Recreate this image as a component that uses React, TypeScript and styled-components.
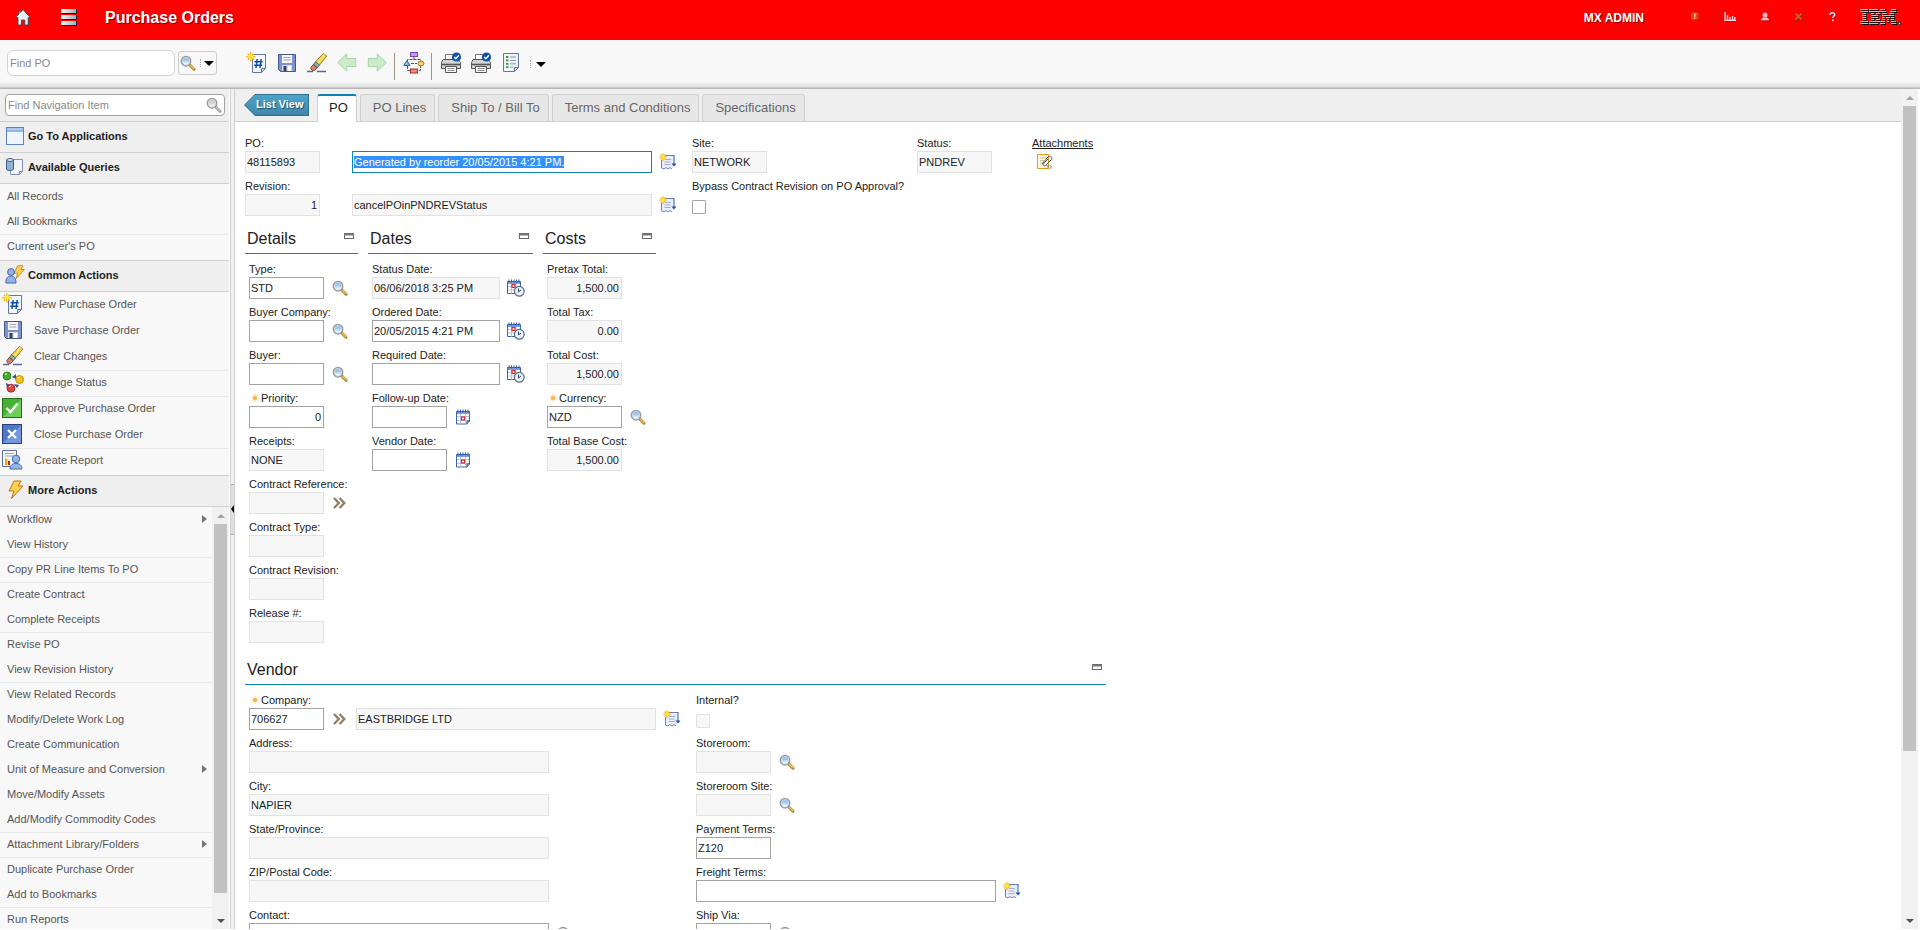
import React, { useEffect, useRef } from "react";
import styled, { createGlobalStyle, css } from "styled-components";

const line = "#cfcfcf";
const accent = "#0d84b8";

const GlobalStyle = createGlobalStyle`
  * { box-sizing: border-box; }
  html, body { margin: 0; padding: 0; background: #fff; overflow: hidden; }
  body, button, input { font-family: "Liberation Sans", Arial, sans-serif; font-size: 11px; color: #222; }
  button { border: 0; padding: 0; background: none; cursor: pointer; }
  svg { display: block; flex: none; }
  ul { list-style: none; margin: 0; padding: 0; }
`;

/* ---------- icons ---------- */

const Star = ({ x = 0, y = 0 }: { x?: number; y?: number }) => (
  <g transform={`translate(${x} ${y})`}>
    <path d="M4 0v8M0 4h8M1.5 1.5l5 5M6.5 1.5l-5 5" stroke="#f5b21a" strokeWidth="1.1" />
    <circle cx="4" cy="4" r="1.9" fill="#ffea2e" />
  </g>
);

const HomeIcon = () => (
  <svg width="16" height="17" viewBox="0 0 16 17">
    <path d="M8 0.6 15.4 8.6h-2.2V16H9.8v-5H6.4v5H3V8.6H.6L4 5V2h1.6v1.4z" fill="#e8f2f7" stroke="#3a4a55" strokeWidth=".9" />
  </svg>
);

const MenuIcon = () => (
  <svg width="16" height="18" viewBox="0 0 16 18">
    <defs>
      <linearGradient id="menuBar" x1="0" x2="1">
        <stop offset="0" stopColor="#f4f8fa" />
        <stop offset="1" stopColor="#9fb0bb" />
      </linearGradient>
    </defs>
    {[1, 7, 13].map((y) => (
      <g key={y}>
        <rect x="0" y={y} width="15" height="4" fill="url(#menuBar)" />
        <path d={`M0 ${y + 4.5}h15.500V${y}`} fill="none" stroke="#16222a" />
      </g>
    ))}
  </svg>
);

const Lens = ({ size = 18, grey = false }: { size?: number; grey?: boolean }) => (
  <svg width={size} height={size} viewBox="0 0 18 18">
    <path d="M10.8 11l4.2 4.2" stroke={grey ? "#8f8f8f" : "#a17a2c"} strokeWidth="3" strokeLinecap="round" />
    <path d="M11.4 11.4l3.4 3.400" stroke={grey ? "#c4c4c4" : "#f0bf4e"} strokeWidth="1.600" strokeLinecap="round" />
    <circle cx="7" cy="7.200" r="4.800" fill={grey ? "#dcdcdc" : "#c3daf1"} stroke="#9a9a9a" strokeWidth="1.300" />
    <path d="M3.800 7a3.200 3.200 0 0 1 6.400 0z" fill={grey ? "#cfcfcf" : "#a5c6e8"} />
    <path d="M4 8.800c1.600 2.600 4.600 2.600 6 0z" fill="#eef5fc" />
  </svg>
);

const NewIcon = () => (
  <svg width="22" height="22" viewBox="0 0 22 22">
    <path d="M6.5 2.5h13v14l-4 4h-9z" fill="#f3f6fc" stroke="#6276a8" />
    <path d="M15.5 20.5v-4h4z" fill="#cdd7ec" stroke="#6276a8" />
    <path d="M11.2 7l-1.2 9M15.2 7L14 16M8.6 9.8h8M8.2 13.2h8" stroke="#0a4fa3" strokeWidth="1.5" />
    <g transform="translate(0 0) scale(1.2)">
      <Star />
    </g>
  </svg>
);

const SaveIcon = () => (
  <svg width="22" height="22" viewBox="0 0 22 22">
    <path d="M2.5 2.5h17v17h-15l-2-2z" fill="#7d93cc" stroke="#46568c" />
    <path d="M6 3h10v8H6z" fill="#f5f5f5" />
    <path d="M7.5 5.5h7M7.5 8h7" stroke="#a6a6a6" />
    <path d="M6 13h10v6H6z" fill="#d9dde6" />
    <path d="M7.5 14h3v5h-3z" fill="#39415a" />
    <path d="M12 14h3v5h-3z" fill="#fff" />
  </svg>
);

const EraserIcon = () => (
  <svg width="22" height="22" viewBox="0 0 22 22">
    <path d="M1 19.5h6M11 19.5h9" stroke="#5969a0" strokeWidth="1.6" />
    <path d="M17.4 1.4l3.4 2.6-7.6 9.4-4-3.2z" fill="#f2cf45" stroke="#8d7320" strokeWidth=".9" />
    <path d="M19 2.2L11 12" stroke="#fbf0a8" strokeWidth="1" />
    <path d="M9.6 9.8l3.9 3.2-2.2 2.6-3.8-3.2z" fill="#8fb5ae" stroke="#43605c" strokeWidth=".9" />
    <path d="M7.4 12.4l3.8 3.2-2.3 2.7c-1.7 1.4-5-.9-3.8-3.1z" fill="#d98468" stroke="#713828" strokeWidth=".9" />
  </svg>
);

const ArrowIcon = ({ forward = false }: { forward?: boolean }) => (
  <svg width="22" height="22" viewBox="0 0 22 22">
    <path
      d={forward ? "M20.3 10.5l-9-8.5v4.5h-9v8h9V19z" : "M1.7 10.5l9-8.5v4.5h9v8h-9V19z"}
      fill="#cdebcb"
      stroke="#a5d4a5"
      strokeLinejoin="round"
    />
  </svg>
);

const FlowIcon = () => (
  <svg width="22" height="22" viewBox="0 0 22 22">
    <path d="M11 5v3M4.500 9.500V7.500h13v2M8 11.500h6M4.500 14v4.500h13V14" fill="none" stroke="#555" strokeDasharray="3 1" />
    <rect x="7.500" y=".5" width="7" height="4" fill="#c49af0" stroke="#7b46b4" />
    <path d="M4 8.500L7 13.500H.8z" fill="#8fbdf0" stroke="#2e5fa3" />
    <ellipse cx="18" cy="11.500" rx="3" ry="2.400" fill="#ffd071" stroke="#a8771a" />
    <rect x="7.500" y="17" width="7" height="4" fill="#f08a85" stroke="#aa2f2c" />
  </svg>
);

const PrinterIcon = () => (
  <svg width="22" height="22" viewBox="0 0 22 22">
    <path d="M5.5 8V2.5h8V8z" fill="#fff" stroke="#777" />
    <path d="M3 7.5h15l2.5 3v6h-19v-6z" fill="#d4d4d4" stroke="#555" />
    <path d="M2 12.5h18" stroke="#555" strokeWidth="1.600" />
    <path d="M5.5 14.5h11v6h-11z" fill="#fff" stroke="#555" />
    <path d="M7.5 16.5h7M7.5 18.5h7" stroke="#8c8c8c" />
    <circle cx="16.5" cy="5" r="4.6" fill="#0d54a6" />
    <path d="M14.2 5l1.7 1.8 3-3.6" fill="none" stroke="#fff" strokeWidth="1.4" />
  </svg>
);

const ReportIcon = () => (
  <svg width="22" height="22" viewBox="0 0 22 22">
    <path d="M3.5 1.5h15v14l-4 4h-11z" fill="#eef2fb" stroke="#6276a8" />
    <path d="M14.5 19.5v-4h4z" fill="#cdd7ec" stroke="#6276a8" />
    <path d="M6 5h2.4M6 8.4h2.4M6 11.8h2.4M6 15.2h2.4" stroke="#3b9a30" strokeWidth="1.8" />
    <path d="M10 5h6M10 8.4h6M10 11.8h6M10 15.2h3" stroke="#8d97b5" />
  </svg>
);

const StatusIcon = () => (
  <svg width="22" height="22" viewBox="0 0 22 22">
    <path d="M10 6l4-3v5zM17 14l-5-1 3 4zM4 12l1 5 3-3z" fill="#27548c" />
    <circle cx="5" cy="5" r="4" fill="#3fae2a" stroke="#27761a" strokeWidth=".8" />
    <circle cx="17.6" cy="8.5" r="4" fill="#f3c01c" stroke="#a67f0b" strokeWidth=".8" />
    <circle cx="9" cy="17.2" r="4" fill="#da4747" stroke="#932323" strokeWidth=".8" />
    <path d="M3 3.6l2-1M15.8 7l2-1M7.2 15.8l2-1" stroke="#fff" strokeOpacity=".7" strokeWidth="1.2" />
  </svg>
);

const TileIcon = ({ ok = false }: { ok?: boolean }) => (
  <svg width="22" height="22" viewBox="0 0 22 22">
    <rect x=".5" y="1.5" width="19" height="19" fill={ok ? "#49b135" : "#5078c8"} stroke={ok ? "#23701b" : "#27407f"} />
    <path d="M1 20L19 2.500V20z" fill={ok ? "#6cd058" : "#7396dd"} />
    <path d={ok ? "M4.500 11l4 4 7-8.500" : "M6 7l8 8M14 7l-8 8"} fill="none" stroke="#fff" strokeWidth="2.300" />
  </svg>
);

const CreateReportIcon = () => (
  <svg width="22" height="22" viewBox="0 0 22 22">
    <path d="M.5 1.500h14v16h-14z" fill="#f7f9fd" stroke="#5c6c98" />
    <path d="M3 4.500h9M3 7h9" stroke="#9aa3bc" />
    <path d="M3 9.500h2.400V16H3z" fill="#e7b10c" />
    <path d="M6 12h2v4H6z" fill="#d31919" />
    <circle cx="14" cy="10" r="3.800" fill="#8fb7ea" stroke="#426fa9" />
    <path d="M8 20c0-4 3-5.600 6-5.600s6 1.600 6 5.600z" fill="#8fb7ea" stroke="#426fa9" />
  </svg>
);

const WindowIcon = () => (
  <svg width="20" height="20" viewBox="0 0 20 20">
    <rect x="1.500" y="1.500" width="17" height="17" fill="#eef5fd" stroke="#5b83bd" />
    <path d="M2 2h16v4H2z" fill="#92b6e8" />
    <path d="M2 3h16" stroke="#c9dcf5" />
  </svg>
);

const QueriesIcon = () => (
  <svg width="20" height="20" viewBox="0 0 20 20">
    <path d="M5.500 2.500h12v12l-3 3h-9z" fill="#f3f5fb" stroke="#8792b8" />
    <path d="M14.500 17.500v-3h3z" fill="#cdd5ea" stroke="#8792b8" />
    <path d="M1.500 3v9c0 2 7 2 7 0V3z" fill="#8fb3d6" stroke="#40617f" />
    <ellipse cx="5" cy="3" rx="3.500" ry="1.500" fill="#d3e4f3" stroke="#40617f" />
  </svg>
);

const Bolt = () => <path d="M9 1h7l-3 5h5L6.500 18.500 9 11H4z" fill="#ffd24d" stroke="#bd7412" strokeLinejoin="round" />;

const CommonIcon = () => (
  <svg width="20" height="20" viewBox="0 0 20 20">
    <g transform="translate(6 0) scale(.75)">
      <Bolt />
    </g>
    <circle cx="6" cy="7" r="3.400" fill="#96b3e6" stroke="#4a68a6" />
    <path d="M.8 18c0-5 2-7 5-7s5.200 2 5.200 7z" fill="#96b3e6" stroke="#4a68a6" />
  </svg>
);

const BoltIcon = () => (
  <svg width="20" height="20" viewBox="0 0 20 20">
    <Bolt />
  </svg>
);

const LongDescIcon = () => (
  <svg width="18" height="18" viewBox="0 0 18 18">
    <path d="M2.500 2.500h12v12l-1.500 1.500-2-1.500-2 1.500-2-1.500-2 1.500-2.500-1z" fill="#e9eefa" />
    <path d="M6 2.500h9.500M2.500 7v8l2.500 1 2-1.500 2 1.500 2-1.500 2 1.500" fill="none" stroke="#6d80b3" />
    <path d="M6 6.500h6M5.500 9h6M5.500 11.500h6" stroke="#a4b0d0" />
    <path d="M15 2.500v9" stroke="#2a58aa" />
    <path d="M12.500 10.500h5L15 13.500z" fill="#1e4fa3" />
    <Star />
  </svg>
);

const CalendarIcon = ({ clock = false }: { clock?: boolean }) => (
  <svg width="18" height="18" viewBox="0 0 18 18">
    {clock ? (
      <>
        <path d="M.5 2.500h13v12H.5z" fill="#fff" stroke="#3d62ab" />
        <path d="M1 7.500h12M1 11h12M4.500 5v9.500M9 5v9.500" stroke="#b4c6ec" />
        <path d="M1 3h12v2H1z" fill="#7ba0e4" />
        <path d="M2 .5v3M4.500 .5v3M7 .5v3M9.500 .5v3M12 .5v3" stroke="#2f58ab" />
        <rect x="5" y="5.500" width="3" height="3" fill="#fff" stroke="#d22a2a" strokeWidth="1.200" />
        <circle cx="12.300" cy="12.300" r="4.900" fill="#eaf1f8" stroke="#566f8b" strokeWidth="1.200" />
        <path d="M11.500 9.500v3.500l2.500-2" fill="none" stroke="#33475c" />
      </>
    ) : (
      <>
        <path d="M2.500 3.500h13v10L13 16H2.500z" fill="#fff" stroke="#3d62ab" />
        <path d="M3 8.500h12M3 12.500h12M6.500 6v9.500M11.500 6v9.500" stroke="#b4c6ec" />
        <path d="M3 4h12v2H3z" fill="#7ba0e4" />
        <path d="M4 1.500v3M6.500 1.500v3M9 1.500v3M11.500 1.500v3M14 1.500v3" stroke="#2f58ab" />
        <rect x="7.500" y="9" width="3" height="3" fill="#fff" stroke="#d22a2a" strokeWidth="1.200" />
        <path d="M13 16v-3h3" fill="#cdd7ec" stroke="#27407f" />
      </>
    )}
  </svg>
);

const GoToIcon = () => (
  <svg width="18" height="18" viewBox="0 0 18 18">
    <path d="M3 4l4.800 5L3 14M8.500 4l4.800 5-4.800 5" fill="none" stroke="#8f816a" strokeWidth="2.400" />
  </svg>
);

const AttachIcon = () => (
  <svg width="18" height="18" viewBox="0 0 18 18">
    <path d="M1.500 1.500h11v14h-11z" fill="#fdf6e0" stroke="#dc9d1c" />
    <path d="M4 5h6M4 7.500h4M4 10h3" stroke="#c9bf9d" />
    <path d="M6 11l6-7c2-2 5 0 3.500 2.500L9.500 12.500c-1.500 1-3-.5-2-2L12 6" fill="none" stroke="#555" />
    <path d="M10.500 12l2 2-2 2M13.500 12l2 2-2 2" fill="none" stroke="#857a64" />
  </svg>
);

const MinimizeIcon = () => (
  <svg width="10" height="7" viewBox="0 0 10 7">
    <rect x=".5" y=".5" width="9" height="5" fill="#fff" stroke="#666" />
    <path d="M0 1.500h10" stroke="#777" strokeWidth="2" />
  </svg>
);

const RequiredIcon = () => (
  <svg width="8" height="8" viewBox="0 0 8 8">
    <path d="M4 0v8M0 4h8M1.200 1.200l5.600 5.600M6.800 1.200L1.200 6.800" stroke="#fcd09a" />
    <circle cx="4" cy="4" r="2" fill="#fbb04a" />
  </svg>
);

const BulletinIcon = () => (
  <svg width="10" height="10" viewBox="0 0 10 10">
    <path d="M2 .5h5.500l1 1v5l-1 1H5L3.500 9.500V7.500H2l-1-1v-5z" fill="#d9480f" />
    <path d="M4.800 1.500v3.200M4.800 5.500v1.200" stroke="#ffc9a8" strokeWidth="1.400" />
  </svg>
);

const ChartIcon = () => (
  <svg width="12" height="10" viewBox="0 0 12 10">
    <path d="M1 0v8.500h11" fill="none" stroke="#f6dfe6" strokeWidth="1.300" />
    <path d="M3.500 8V3M6 8V5M8.500 8V4M10.700 8V5" stroke="#f0c3cf" strokeWidth="1.500" />
    <path d="M1 9.500h11" stroke="#6b2a4a" />
  </svg>
);

const PersonIcon = () => (
  <svg width="10" height="10" viewBox="0 0 10 10">
    <circle cx="5" cy="3" r="2.500" fill="#f3b7c4" />
    <path d="M1 8.500C1 6 3 5.500 5 5.500s4 .5 4 3z" fill="#f3b7c4" />
    <path d="M1 9h8.500" stroke="#7a2b48" />
  </svg>
);

const CrossIcon = () => (
  <svg width="10" height="10" viewBox="0 0 10 10">
    <path d="M2 2l6.500 6.500M8.500 2L2 8.500" stroke="#7c2a18" strokeWidth="2" />
    <path d="M1.500 1.500l6 6M7.500 1.500l-6 6" stroke="#d8571a" strokeWidth="2" />
  </svg>
);

const HelpIcon = () => (
  <svg width="10" height="10" viewBox="0 0 10 10">
    <path d="M2.500 3.500C2.500 0 8 .5 7.500 3.300 7.300 4.600 5.300 4.600 5.300 6.500" fill="none" stroke="#6d2238" strokeWidth="2" />
    <path d="M2 3C2 0 7 0 6.800 2.800 6.600 4.200 4.800 4.200 4.800 6M4.800 7.500V9.300" fill="none" stroke="#ffd3db" strokeWidth="1.500" />
  </svg>
);

/* Striped three-letter logo: each row lists its [start, end] bars. */
const logoRows: number[][][] = [
  [[0, 8], [9, 18], [20, 25], [31, 36]],
  [[0, 8], [9, 20], [20, 26], [30, 36]],
  [[2, 6], [11, 14], [16, 20], [22, 27], [29, 34]],
  [[2, 6], [11, 18], [22, 34]],
  [[2, 6], [11, 18], [22, 25], [26, 30], [31, 34]],
  [[2, 6], [11, 14], [16, 20], [22, 25], [27, 29], [31, 34]],
  [[0, 8], [9, 20], [20, 25], [27, 29], [31, 36]],
  [[0, 8], [9, 18], [20, 25], [28, 28], [31, 36]],
];

const LogoIcon = () => (
  <svg width="42" height="17" viewBox="0 0 42 17" role="img" aria-label="IBM">
    {logoRows.map((row, r) =>
      row.map(([a, b]) => (
        <g key={`${r}-${a}`}>
          <rect x={a + 1} y={r * 2 + 1} width={b - a} height="1" fill="#1c0505" />
          <rect x={a} y={r * 2} width={b - a} height="1" fill="#ddb9b9" />
        </g>
      )),
    )}
    <circle cx="39.500" cy="14.500" r="1.300" fill="#ddb9b9" stroke="#1c0505" strokeWidth=".8" />
  </svg>
);

/* ---------- shell ---------- */

const Shell = styled.div`
  height: 100vh;
  display: flex;
  flex-direction: column;
`;

const Banner = styled.header`
  flex: none;
  height: 40px;
  display: flex;
  align-items: center;
  padding: 0 18px 6px 15px;
  background: #fe0000;
`;

const BannerButton = styled.button<{ $gap: number }>`
  margin-right: ${(p) => p.$gap}px;
`;

const AppTitle = styled.h1`
  flex: 1;
  margin: 0;
  padding-top: 1px;
  font-size: 16px;
  line-height: 20px;
  color: #fff;
  text-shadow: 1px 1px 1px rgba(60, 0, 0, 0.6);
`;

const UserName = styled.span`
  margin-right: 46px;
  padding-top: 1px;
  font-size: 12px;
  font-weight: bold;
  color: #fff;
  text-shadow: 1px 1px 1px rgba(60, 0, 0, 0.6);
`;

const BannerLinks = styled.nav`
  display: flex;
  gap: 24px;
  margin-right: 22px;
`;

const Toolbar = styled.div`
  flex: none;
  height: 49px;
  display: flex;
  align-items: flex-start;
  padding: 10px 7px 0;
  background: linear-gradient(#f8f8f8 43px, #ececec 43px, #e2e2e2 47px, #cacaca 47px);
  border-bottom: 1px solid #b7b7b7;
`;

const FindInput = styled.input`
  width: 168px;
  height: 26px;
  padding: 0 2px;
  border: 1px solid #d2d2d2;
  border-radius: 6px;
  background: #fff;
  outline: 0;
  &::placeholder { color: #8a8a8a; }
`;

const FindButton = styled.button`
  display: flex;
  align-items: center;
  gap: 3px;
  width: 39px;
  height: 24px;
  margin: 1px 24px 0 3px;
  border: 1px solid #cdcdcd;
  border-radius: 3px;
`;

const Dots = styled.span`
  width: 1px;
  height: 8px;
  border-left: 1px dotted #aaa;
`;

const Caret = styled.span`
  border: 5px solid transparent;
  border-top-color: #000;
  border-bottom-width: 0;
`;

const ToolButton = styled.button`
  width: 30px;
  height: 24px;
  padding-left: 5px;
  margin-top: 1px;
`;

const ToolSeparator = styled.span`
  width: 1px;
  height: 27px;
  margin: 3px 3px 0;
  background: #9b9787;
`;

const MoreTools = styled.button`
  display: flex;
  align-items: center;
  gap: 5px;
  height: 24px;
  margin: 2px 0 0 5px;
`;

const Body = styled.div`
  flex: 1;
  min-height: 0;
  display: flex;
  padding: 0 2px 1px 0;
`;

/* ---------- scroll bar ---------- */

const ScrollRail = styled.div`
  flex: none;
  width: 17px;
  display: flex;
  flex-direction: column;
  background: #f1f1f1;
`;

const ScrollTrack = styled.div`
  flex: 1;
  padding: 0 2px;
`;

const ScrollThumb = styled.div<{ $share: number }>`
  height: ${(p) => p.$share}%;
  background: #c1c1c1;
`;

const ScrollArrow = styled.button<{ $down?: boolean }>`
  height: 17px;
  display: flex;
  align-items: center;
  justify-content: center;
  &::after {
    content: "";
    border: 4px solid transparent;
    ${(p) =>
      p.$down
        ? "border-top-color: #505050; border-bottom-width: 0;"
        : "border-bottom-color: #a3a3a3; border-top-width: 0;"}
  }
`;

const ScrollBar = ({ share }: { share: number }) => (
  <ScrollRail>
    <ScrollArrow aria-label="Scroll up" />
    <ScrollTrack>
      <ScrollThumb $share={share} />
    </ScrollTrack>
    <ScrollArrow $down aria-label="Scroll down" />
  </ScrollRail>
);

/* ---------- navigation ---------- */

const Sidebar = styled.aside`
  flex: none;
  width: 229px;
  display: flex;
  flex-direction: column;
  background: #f8f8f8;
`;

const NavSearch = styled.div`
  flex: none;
  height: 33px;
  padding: 5px 4px 0 5px;
  background: #efefef;
  border-bottom: 1px solid ${line};
`;

const NavSearchBox = styled.div`
  display: flex;
  align-items: center;
  height: 22px;
  padding-right: 1px;
  background: #fff;
  border: 1px solid #a2a2a2;
  border-radius: 4px;
`;

const NavSearchInput = styled.input`
  flex: 1;
  min-width: 0;
  padding: 0 2px;
  border: 0;
  outline: 0;
  background: none;
  &::placeholder { color: #8a8a8a; }
`;

const SectionHead = styled.h2`
  flex: none;
  display: flex;
  align-items: center;
  gap: 3px;
  height: 31px;
  margin: 0;
  padding: 0 0 2px 5px;
  font-size: 11px;
  color: #222;
  background: #efefef;
  border-bottom: 1px solid ${line};
`;

const NavList = styled.ul<{ $last?: boolean }>`
  flex: ${(p) => (p.$last ? "1" : "none")};
  min-height: 0;
  overflow: hidden;
  padding-top: 1px;
  border-bottom: ${(p) => (p.$last ? "0" : `1px solid ${line}`)};
`;

const NavItem = styled.li<{ $ruled?: boolean }>`
  border-bottom: 1px solid ${(p) => (p.$ruled ? "#e9e9e9" : "transparent")};
`;

const NavButton = styled.button<{ $icon?: boolean }>`
  display: flex;
  align-items: center;
  gap: 10px;
  width: 100%;
  height: ${(p) => (p.$icon ? 25 : 24)}px;
  padding: ${(p) => (p.$icon ? "0 5px 3px 2px" : "0 5px 2px 7px")};
  color: #555;
  text-align: left;
`;

const Submenu = styled.span`
  margin-left: auto;
  border: 4px solid transparent;
  border-left: 5px solid #777;
  border-right: 0;
`;

const MoreArea = styled.div`
  flex: 1;
  min-height: 0;
  display: flex;
`;

const Splitter = styled.div`
  flex: none;
  width: 5px;
  margin-left: 1px;
  display: flex;
  align-items: center;
  background: #f1f1f1;
  border: solid ${line};
  border-width: 0 1px;
`;

const SplitterHandle = styled.button`
  width: 3px;
  height: 51px;
  display: flex;
  align-items: center;
  background: #e0e0e0;
  border: solid #aaa;
  border-width: 1px 0;
  &::after {
    content: "";
    border: 4px solid transparent;
    border-right: 3px solid #000;
    border-left: 0;
  }
`;

/* ---------- main pane ---------- */

const MainPane = styled.main`
  flex: 1;
  min-width: 0;
  display: flex;
`;

const Content = styled.div`
  flex: 1;
  min-width: 0;
  overflow: hidden;
  background: #fff;
`;

const TabBar = styled.div`
  height: 33px;
  display: flex;
  align-items: flex-start;
  gap: 3px;
  padding: 5px 9px 0;
  background: #efefef;
  border-bottom: 1px solid ${line};
`;

const ListViewButton = styled.button`
  width: 65px;
  height: 22px;
  margin-right: 5px;
  padding: 1px;
  background: #2f6f8d;
  clip-path: polygon(0 50%, 11px 0, 100% 0, 100% 100%, 11px 100%);
`;

const ListViewFace = styled.span`
  display: block;
  height: 20px;
  padding-left: 11px;
  line-height: 19px;
  font-weight: bold;
  color: #fff;
  text-align: left;
  background: linear-gradient(#4ba5cb, #4186aa);
  text-shadow: 1px 1px 1px #20506a;
  clip-path: polygon(0 50%, 10px 0, 100% 0, 100% 100%, 10px 100%);
`;

const Tab = styled.button<{ $active?: boolean }>`
  height: 27px;
  padding: 0 8px 2px 12px;
  font-size: 13px;
  color: #666;
  background: #e7e7e7;
  border: 1px solid ${line};
  border-bottom: 0;
  border-radius: 3px 3px 0 0;
  ${(p) =>
    p.$active &&
    css`
      height: 28px;
      padding: 0 8px 4px 11px;
      color: #222;
      background: #fff;
      border-top: 2px solid ${accent};
    `}
`;

const Form = styled.div`
  padding: 13px 10px 0;
`;

const RecordHead = styled.div`
  display: grid;
  grid-template-columns: 107px 340px 225px 115px max-content;
`;

const SectionRow = styled.div`
  display: flex;
  gap: 10px;
`;

const Section = styled.section<{ $width: number }>`
  width: ${(p) => p.$width}px;
`;

const VendorSection = styled(Section)`
  margin-top: 4px;
`;

const SectionTitle = styled.header`
  display: flex;
  justify-content: space-between;
  height: 33px;
  padding: 8px 4px 0 2px;
  border-bottom: 1px solid ${accent};
`;

const SectionName = styled.h3`
  margin: 0;
  font-size: 16px;
  line-height: 20px;
  font-weight: normal;
  color: #222;
`;

const SectionToggle = styled.button`
  height: 7px;
  margin-top: 4px;
`;

const SectionBody = styled.div`
  padding: 7px 4px 0;
`;

const VendorColumns = styled.div`
  display: grid;
  grid-template-columns: 447px max-content;
`;

const FieldBox = styled.div`
  height: 43px;
`;

const FieldLabel = styled.label`
  display: flex;
  align-items: center;
  gap: 2px;
  height: 16px;
  white-space: nowrap;
  color: #222;
`;

const LabelRow = styled.div`
  height: 16px;
`;

const RequiredMark = styled.span`
  margin-left: 2px;
`;

const FieldLine = styled.div`
  display: flex;
  align-items: center;
  gap: 7px;
  height: 22px;
`;

const TextBox = styled.input<{ $width: number; $right?: boolean }>`
  flex: none;
  width: ${(p) => p.$width}px;
  height: 22px;
  padding: 0 2px 0 1px;
  color: #222;
  text-align: ${(p) => (p.$right ? "right" : "left")};
  background: ${(p) => (p.readOnly ? "#f7f7f7" : "#fff")};
  border: 1px solid ${(p) => (p.readOnly ? "#e2e2e2" : "#a3a3a3")};
  outline: 0;
  &:focus { border-color: ${accent}; }
  &::selection { background: #3390ff; color: #fff; }
`;

const TickBox = styled.input`
  appearance: none;
  width: 14px;
  height: 14px;
  margin: 4px 0 0;
  background: #fff;
  border: 1px solid #a3a3a3;
  border-radius: 1px;
  &:disabled { background: #f7f7f7; border-color: #e2e2e2; }
`;

const IconButton = styled.button`
  width: 18px;
  height: 18px;
`;

const AttachmentsLink = styled.a`
  display: block;
  line-height: 16px;
  color: #222;
`;

const AttachmentsButton = styled(IconButton)`
  margin: 2px 0 0 4px;
`;

type IconName = "lookup" | "long" | "date" | "datetime" | "goto";

const fieldIcons: Record<IconName, { node: React.ReactNode; title: string }> = {
  lookup: { node: <Lens />, title: "Select value" },
  long: { node: <LongDescIcon />, title: "Long description" },
  date: { node: <CalendarIcon />, title: "Select date" },
  datetime: { node: <CalendarIcon clock />, title: "Select date and time" },
  goto: { node: <GoToIcon />, title: "Detail menu" },
};

const FieldIcon = ({ name }: { name: IconName }) => (
  <IconButton aria-label={fieldIcons[name].title}>{fieldIcons[name].node}</IconButton>
);

type FieldProps = {
  id: string;
  label?: string;
  value?: string;
  width?: number;
  icon?: IconName;
  readOnly?: boolean;
  right?: boolean;
  required?: boolean;
  inputRef?: React.Ref<HTMLInputElement>;
  children?: React.ReactNode;
};

const Field = ({ id, label, value = "", width = 75, icon, readOnly, right, required, inputRef, children }: FieldProps) => (
  <FieldBox>
    {label ? (
      <FieldLabel htmlFor={id}>
        {required && (
          <RequiredMark>
            <RequiredIcon />
          </RequiredMark>
        )}
        {label}
      </FieldLabel>
    ) : (
      <LabelRow />
    )}
    <FieldLine>
      <TextBox
        id={id}
        ref={inputRef}
        aria-label={label ? undefined : "Description"}
        defaultValue={value}
        readOnly={readOnly}
        $width={width}
        $right={right}
      />
      {icon && <FieldIcon name={icon} />}
      {children}
    </FieldLine>
  </FieldBox>
);

const TickField = ({ id, label, disabled }: { id: string; label: string; disabled?: boolean }) => (
  <FieldBox>
    <FieldLabel htmlFor={id}>{label}</FieldLabel>
    <FieldLine>
      <TickBox id={id} type="checkbox" disabled={disabled} />
    </FieldLine>
  </FieldBox>
);

const Heading = ({ children }: { children: string }) => (
  <SectionTitle>
    <SectionName>{children}</SectionName>
    <SectionToggle aria-label={`Minimize ${children}`}>
      <MinimizeIcon />
    </SectionToggle>
  </SectionTitle>
);

/* ---------- data ---------- */

type Entry = { text: string; ruled?: boolean; sub?: boolean; icon?: React.ReactNode };

const queries: Entry[] = [{ text: "All Records" }, { text: "All Bookmarks", ruled: true }, { text: "Current user's PO" }];

const commonActions: Entry[] = [
  { text: "New Purchase Order", icon: <NewIcon /> },
  { text: "Save Purchase Order", icon: <SaveIcon /> },
  { text: "Clear Changes", icon: <EraserIcon />, ruled: true },
  { text: "Change Status", icon: <StatusIcon />, ruled: true },
  { text: "Approve Purchase Order", icon: <TileIcon ok /> },
  { text: "Close Purchase Order", icon: <TileIcon />, ruled: true },
  { text: "Create Report", icon: <CreateReportIcon /> },
];

const moreActions: Entry[] = [
  { text: "Workflow", sub: true },
  { text: "View History", ruled: true },
  { text: "Copy PR Line Items To PO", ruled: true },
  { text: "Create Contract" },
  { text: "Complete Receipts", ruled: true },
  { text: "Revise PO" },
  { text: "View Revision History", ruled: true },
  { text: "View Related Records" },
  { text: "Modify/Delete Work Log" },
  { text: "Create Communication" },
  { text: "Unit of Measure and Conversion", sub: true },
  { text: "Move/Modify Assets" },
  { text: "Add/Modify Commodity Codes", ruled: true },
  { text: "Attachment Library/Folders", sub: true, ruled: true },
  { text: "Duplicate Purchase Order" },
  { text: "Add to Bookmarks", ruled: true },
  { text: "Run Reports" },
];

const tabs = ["PO", "PO Lines", "Ship To / Bill To", "Terms and Conditions", "Specifications"];

const NavEntries = ({ items, last }: { items: Entry[]; last?: boolean }) => (
  <NavList $last={last}>
    {items.map(({ text, ruled, sub, icon }) => (
      <NavItem key={text} $ruled={ruled}>
        <NavButton $icon={!!icon}>
          {icon}
          {text}
          {sub && <Submenu />}
        </NavButton>
      </NavItem>
    ))}
  </NavList>
);

/* ---------- page ---------- */

export default function App() {
  const description = useRef<HTMLInputElement>(null);

  useEffect(() => {
    description.current?.focus();
    description.current?.select();
  }, []);

  return (
    <Shell>
      <GlobalStyle />
      <Banner>
        <BannerButton $gap={30} aria-label="Start center">
          <HomeIcon />
        </BannerButton>
        <BannerButton $gap={28} aria-label="Menu">
          <MenuIcon />
        </BannerButton>
        <AppTitle>Purchase Orders</AppTitle>
        <UserName>MX ADMIN</UserName>
        <BannerLinks>
          <button aria-label="Bulletins"><BulletinIcon /></button>
          <button aria-label="Reports"><ChartIcon /></button>
          <button aria-label="Profile"><PersonIcon /></button>
          <button aria-label="Sign out"><CrossIcon /></button>
          <button aria-label="Help"><HelpIcon /></button>
        </BannerLinks>
        <LogoIcon />
      </Banner>

      <Toolbar>
        <FindInput aria-label="Find PO" placeholder="Find PO" />
        <FindButton aria-label="Find">
          <Lens />
          <Dots />
          <Caret />
        </FindButton>
        <ToolButton aria-label="New Purchase Order"><NewIcon /></ToolButton>
        <ToolButton aria-label="Save Purchase Order"><SaveIcon /></ToolButton>
        <ToolButton aria-label="Clear Changes"><EraserIcon /></ToolButton>
        <ToolButton aria-label="Previous Record"><ArrowIcon /></ToolButton>
        <ToolButton aria-label="Next Record"><ArrowIcon forward /></ToolButton>
        <ToolSeparator />
        <ToolButton aria-label="Route Workflow"><FlowIcon /></ToolButton>
        <ToolSeparator />
        <ToolButton aria-label="Print Purchase Order"><PrinterIcon /></ToolButton>
        <ToolButton aria-label="Print with Attachments"><PrinterIcon /></ToolButton>
        <ToolButton aria-label="Purchase Order Report"><ReportIcon /></ToolButton>
        <MoreTools aria-label="More tools">
          <Dots />
          <Caret />
        </MoreTools>
      </Toolbar>

      <Body>
        <Sidebar>
          <NavSearch>
            <NavSearchBox>
              <NavSearchInput aria-label="Find Navigation Item" placeholder="Find Navigation Item" />
              <Lens grey />
            </NavSearchBox>
          </NavSearch>
          <SectionHead><WindowIcon />Go To Applications</SectionHead>
          <SectionHead><QueriesIcon />Available Queries</SectionHead>
          <NavEntries items={queries} />
          <SectionHead><CommonIcon />Common Actions</SectionHead>
          <NavEntries items={commonActions} />
          <SectionHead><BoltIcon />More Actions</SectionHead>
          <MoreArea>
            <NavEntries items={moreActions} last />
            <ScrollBar share={95} />
          </MoreArea>
        </Sidebar>
        <Splitter>
          <SplitterHandle aria-label="Collapse navigation" />
        </Splitter>

        <MainPane>
          <Content>
            <TabBar>
              <ListViewButton>
                <ListViewFace>List View</ListViewFace>
              </ListViewButton>
              {tabs.map((name, i) => (
                <Tab key={name} $active={i === 0}>{name}</Tab>
              ))}
            </TabBar>
            <Form>
              <RecordHead>
                <Field id="po" label="PO:" value="48115893" readOnly />
                <Field
                  id="description"
                  value="Generated by reorder 20/05/2015 4:21 PM."
                  width={300}
                  icon="long"
                  inputRef={description}
                />
                <Field id="site" label="Site:" value="NETWORK" readOnly />
                <Field id="status" label="Status:" value="PNDREV" readOnly />
                <div>
                  <AttachmentsLink href="#attachments">Attachments</AttachmentsLink>
                  <AttachmentsButton aria-label="View attachments">
                    <AttachIcon />
                  </AttachmentsButton>
                </div>
                <Field id="revision" label="Revision:" value="1" right readOnly />
                <Field id="revisionText" value="cancelPOinPNDREVStatus" width={300} icon="long" readOnly />
                <TickField id="bypass" label="Bypass Contract Revision on PO Approval?" />
              </RecordHead>

              <SectionRow>
                <Section $width={113}>
                  <Heading>Details</Heading>
                  <SectionBody>
                    <Field id="type" label="Type:" value="STD" icon="lookup" />
                    <Field id="buyerCompany" label="Buyer Company:" icon="lookup" />
                    <Field id="buyer" label="Buyer:" icon="lookup" />
                    <Field id="priority" label="Priority:" value="0" right required />
                    <Field id="receipts" label="Receipts:" value="NONE" readOnly />
                    <Field id="contractRef" label="Contract Reference:" icon="goto" readOnly />
                    <Field id="contractType" label="Contract Type:" readOnly />
                    <Field id="contractRev" label="Contract Revision:" readOnly />
                    <Field id="release" label="Release #:" readOnly />
                  </SectionBody>
                </Section>
                <Section $width={165}>
                  <Heading>Dates</Heading>
                  <SectionBody>
                    <Field id="statusDate" label="Status Date:" value="06/06/2018 3:25 PM" width={128} icon="datetime" readOnly />
                    <Field id="orderedDate" label="Ordered Date:" value="20/05/2015 4:21 PM" width={128} icon="datetime" />
                    <Field id="requiredDate" label="Required Date:" width={128} icon="datetime" />
                    <Field id="followUp" label="Follow-up Date:" icon="date" />
                    <Field id="vendorDate" label="Vendor Date:" icon="date" />
                  </SectionBody>
                </Section>
                <Section $width={113}>
                  <Heading>Costs</Heading>
                  <SectionBody>
                    <Field id="pretax" label="Pretax Total:" value="1,500.00" right readOnly />
                    <Field id="tax" label="Total Tax:" value="0.00" right readOnly />
                    <Field id="totalCost" label="Total Cost:" value="1,500.00" right readOnly />
                    <Field id="currency" label="Currency:" value="NZD" icon="lookup" required />
                    <Field id="baseCost" label="Total Base Cost:" value="1,500.00" right readOnly />
                  </SectionBody>
                </Section>
              </SectionRow>

              <VendorSection $width={861}>
                <Heading>Vendor</Heading>
                <SectionBody>
                  <VendorColumns>
                    <div>
                      <Field id="company" label="Company:" value="706627" icon="goto" required>
                        <TextBox aria-label="Company name" defaultValue="EASTBRIDGE LTD" readOnly $width={300} />
                        <FieldIcon name="long" />
                      </Field>
                      <Field id="address" label="Address:" width={300} readOnly />
                      <Field id="city" label="City:" value="NAPIER" width={300} readOnly />
                      <Field id="state" label="State/Province:" width={300} readOnly />
                      <Field id="zip" label="ZIP/Postal Code:" width={300} readOnly />
                      <Field id="contact" label="Contact:" width={300} icon="lookup" />
                    </div>
                    <div>
                      <TickField id="internal" label="Internal?" disabled />
                      <Field id="storeroom" label="Storeroom:" icon="lookup" readOnly />
                      <Field id="storeroomSite" label="Storeroom Site:" icon="lookup" readOnly />
                      <Field id="paymentTerms" label="Payment Terms:" value="Z120" />
                      <Field id="freightTerms" label="Freight Terms:" width={300} icon="long" />
                      <Field id="shipVia" label="Ship Via:" icon="lookup" />
                    </div>
                  </VendorColumns>
                </SectionBody>
              </VendorSection>
            </Form>
          </Content>
          <ScrollBar share={80} />
        </MainPane>
      </Body>
    </Shell>
  );
}
